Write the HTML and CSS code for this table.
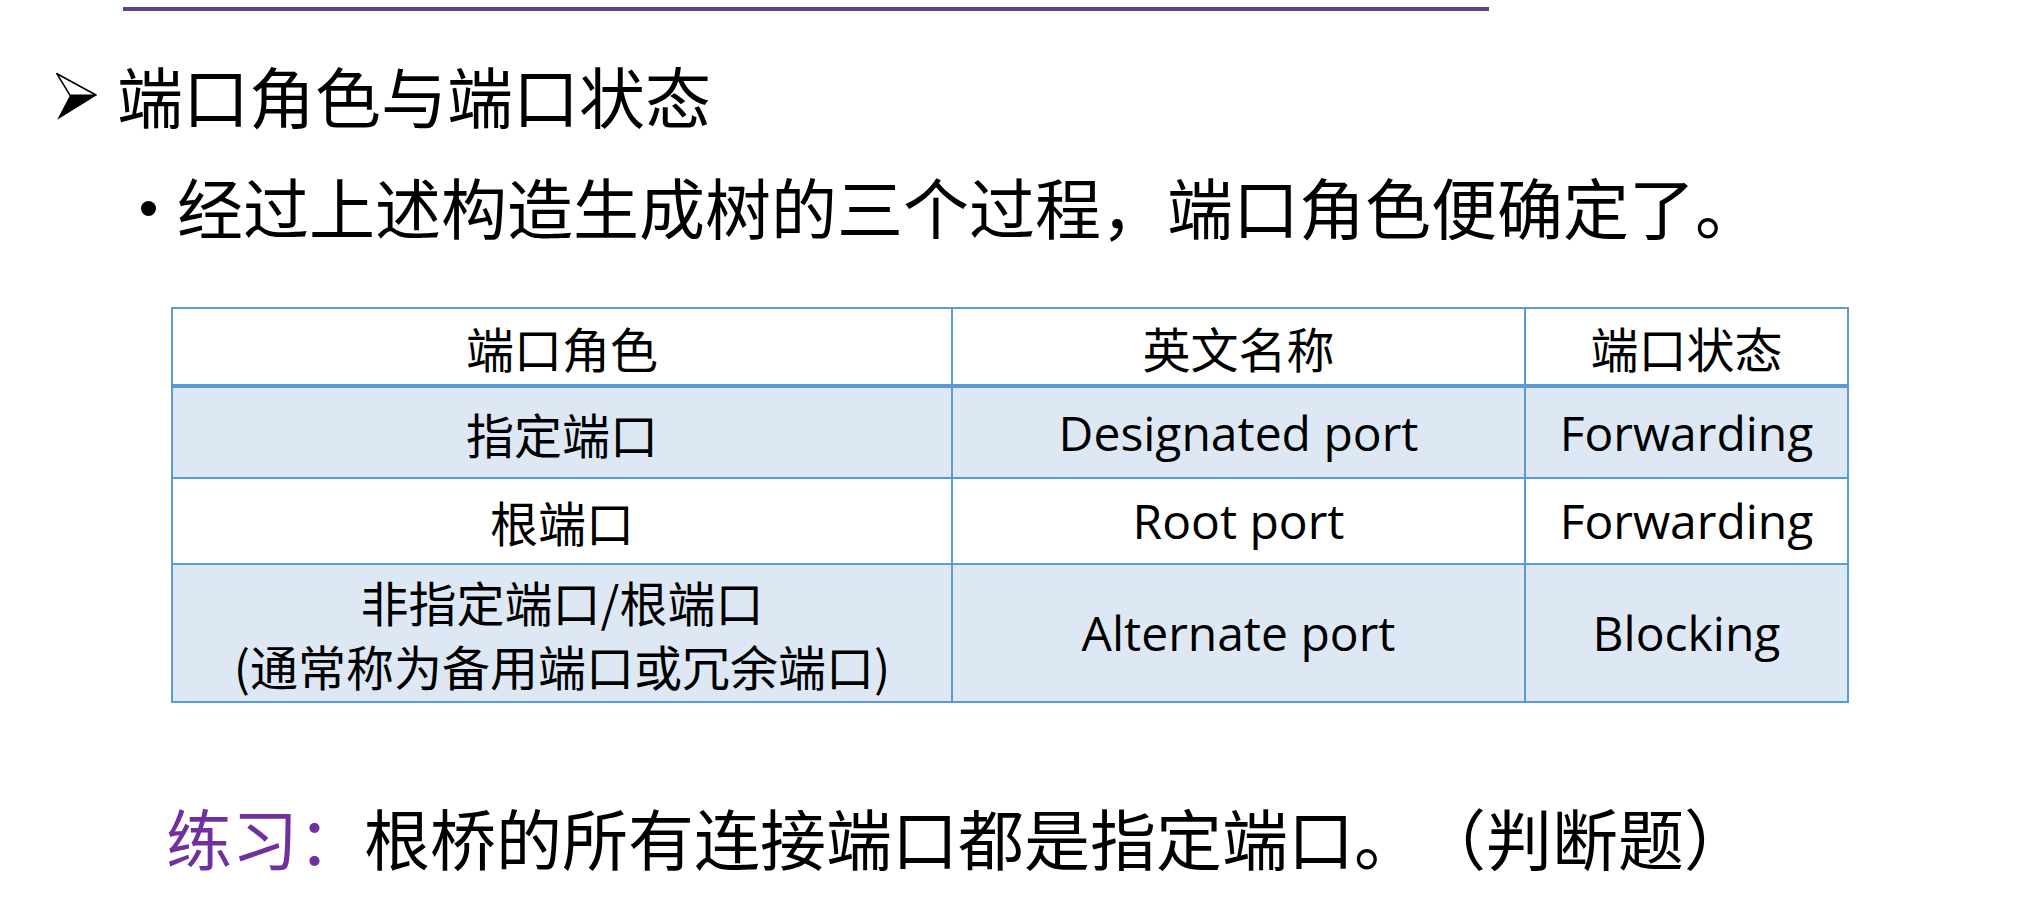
FILE: index.html
```html
<!DOCTYPE html>
<html lang="zh-CN">
<head>
<meta charset="utf-8">
<title>端口角色与端口状态</title>
<link rel="stylesheet" href="styles.css">
</head>
<body>
<div class="slide">
  <div class="rule"></div>
  <div class="heading">
    <svg class="arrow" width="42" height="48" viewBox="0 0 42 48" aria-hidden="true">
      <polygon points="1,0.8 40.4,22.3 14,22.3" fill="#fff" stroke="#000" stroke-width="1.6" stroke-linejoin="miter"/>
      <polygon points="14,22.3 40.8,22.3 1.2,46.8" fill="#000"/>
    </svg>
    <span class="heading-text">端口角色与端口状态</span>
  </div>
  <div class="bullet">
    <span class="dot"></span>
    <span class="bullet-text">经过上述构造生成树的三个过程，端口角色便确定了。</span>
  </div>
  <table class="roles">
    <colgroup>
      <col class="c1">
      <col class="c2">
      <col class="c3">
    </colgroup>
    <thead>
      <tr class="r-head">
        <th>端口角色</th>
        <th>英文名称</th>
        <th>端口状态</th>
      </tr>
    </thead>
    <tbody>
      <tr class="r1 shade">
        <td>指定端口</td>
        <td class="en">Designated port</td>
        <td class="en">Forwarding</td>
      </tr>
      <tr class="r2">
        <td>根端口</td>
        <td class="en">Root port</td>
        <td class="en">Forwarding</td>
      </tr>
      <tr class="r3 shade">
        <td class="two">非指定端口/根端口<br>(通常称为备用端口或冗余端口)</td>
        <td class="en">Alternate port</td>
        <td class="en">Blocking</td>
      </tr>
    </tbody>
  </table>
  <div class="exercise"><span class="tag">练习：</span>根桥的所有连接端口都是指定端口。（判断题）</div>
</div>
</body>
</html>
```

FILE: styles.css
```css
html, body {
  margin: 0;
  padding: 0;
  background: #ffffff;
}

body {
  font-family: "Noto Sans CJK SC", "Noto Sans", sans-serif;
  color: #000000;
  text-spacing-trim: space-all;
}

.slide {
  width: 2036px;
  height: 904px;
  overflow: hidden;
}

.rule {
  margin-top: 7px;
  margin-left: 123px;
  width: 1366px;
  height: 4px;
  background: #663c8c;
}

.heading {
  display: flex;
  align-items: center;
  margin-top: 50px;
  padding-left: 56px;
  font-size: 66px;
  line-height: 66px;
  height: 66px;
}

.arrow {
  display: block;
  margin-right: 19px;
  margin-top: 6px;
  flex: none;
}

.bullet {
  display: flex;
  align-items: center;
  margin-top: 45px;
  padding-left: 141px;
  font-size: 66px;
  line-height: 66px;
  height: 66px;
}

.dot {
  width: 15px;
  height: 15px;
  border-radius: 50%;
  background: #000;
  margin-right: 21px;
  margin-top: 6px;
  flex: none;
}

.roles {
  margin-top: 69px;
  margin-left: 171px;
  width: 1676px;
  table-layout: fixed;
  border-collapse: collapse;
  font-size: 48px;
}

.c1 { width: 780px; }
.c2 { width: 573px; }
.c3 { width: 323px; }

.roles th,
.roles td {
  border: 2px solid #5b9bd5;
  padding: 0;
  text-align: center;
  vertical-align: middle;
  font-weight: normal;
  line-height: 64px;
}

.roles thead th {
  border-bottom: 4px solid #5b9bd5;
}

.r-head { height: 78px; }
.r1 { height: 92px; }
.r2 { height: 86px; }
.r3 { height: 138px; }

.shade td {
  background: #dde8f4;
}

.en {
  font-family: "Open Sans", "Noto Sans CJK SC", sans-serif;
}

.two {
  line-height: 64px;
}

.exercise {
  margin-top: 100px;
  padding-left: 166px;
  font-size: 66px;
  line-height: 66px;
  height: 66px;
  white-space: nowrap;
}

.tag {
  color: #7030a0;
}
```
